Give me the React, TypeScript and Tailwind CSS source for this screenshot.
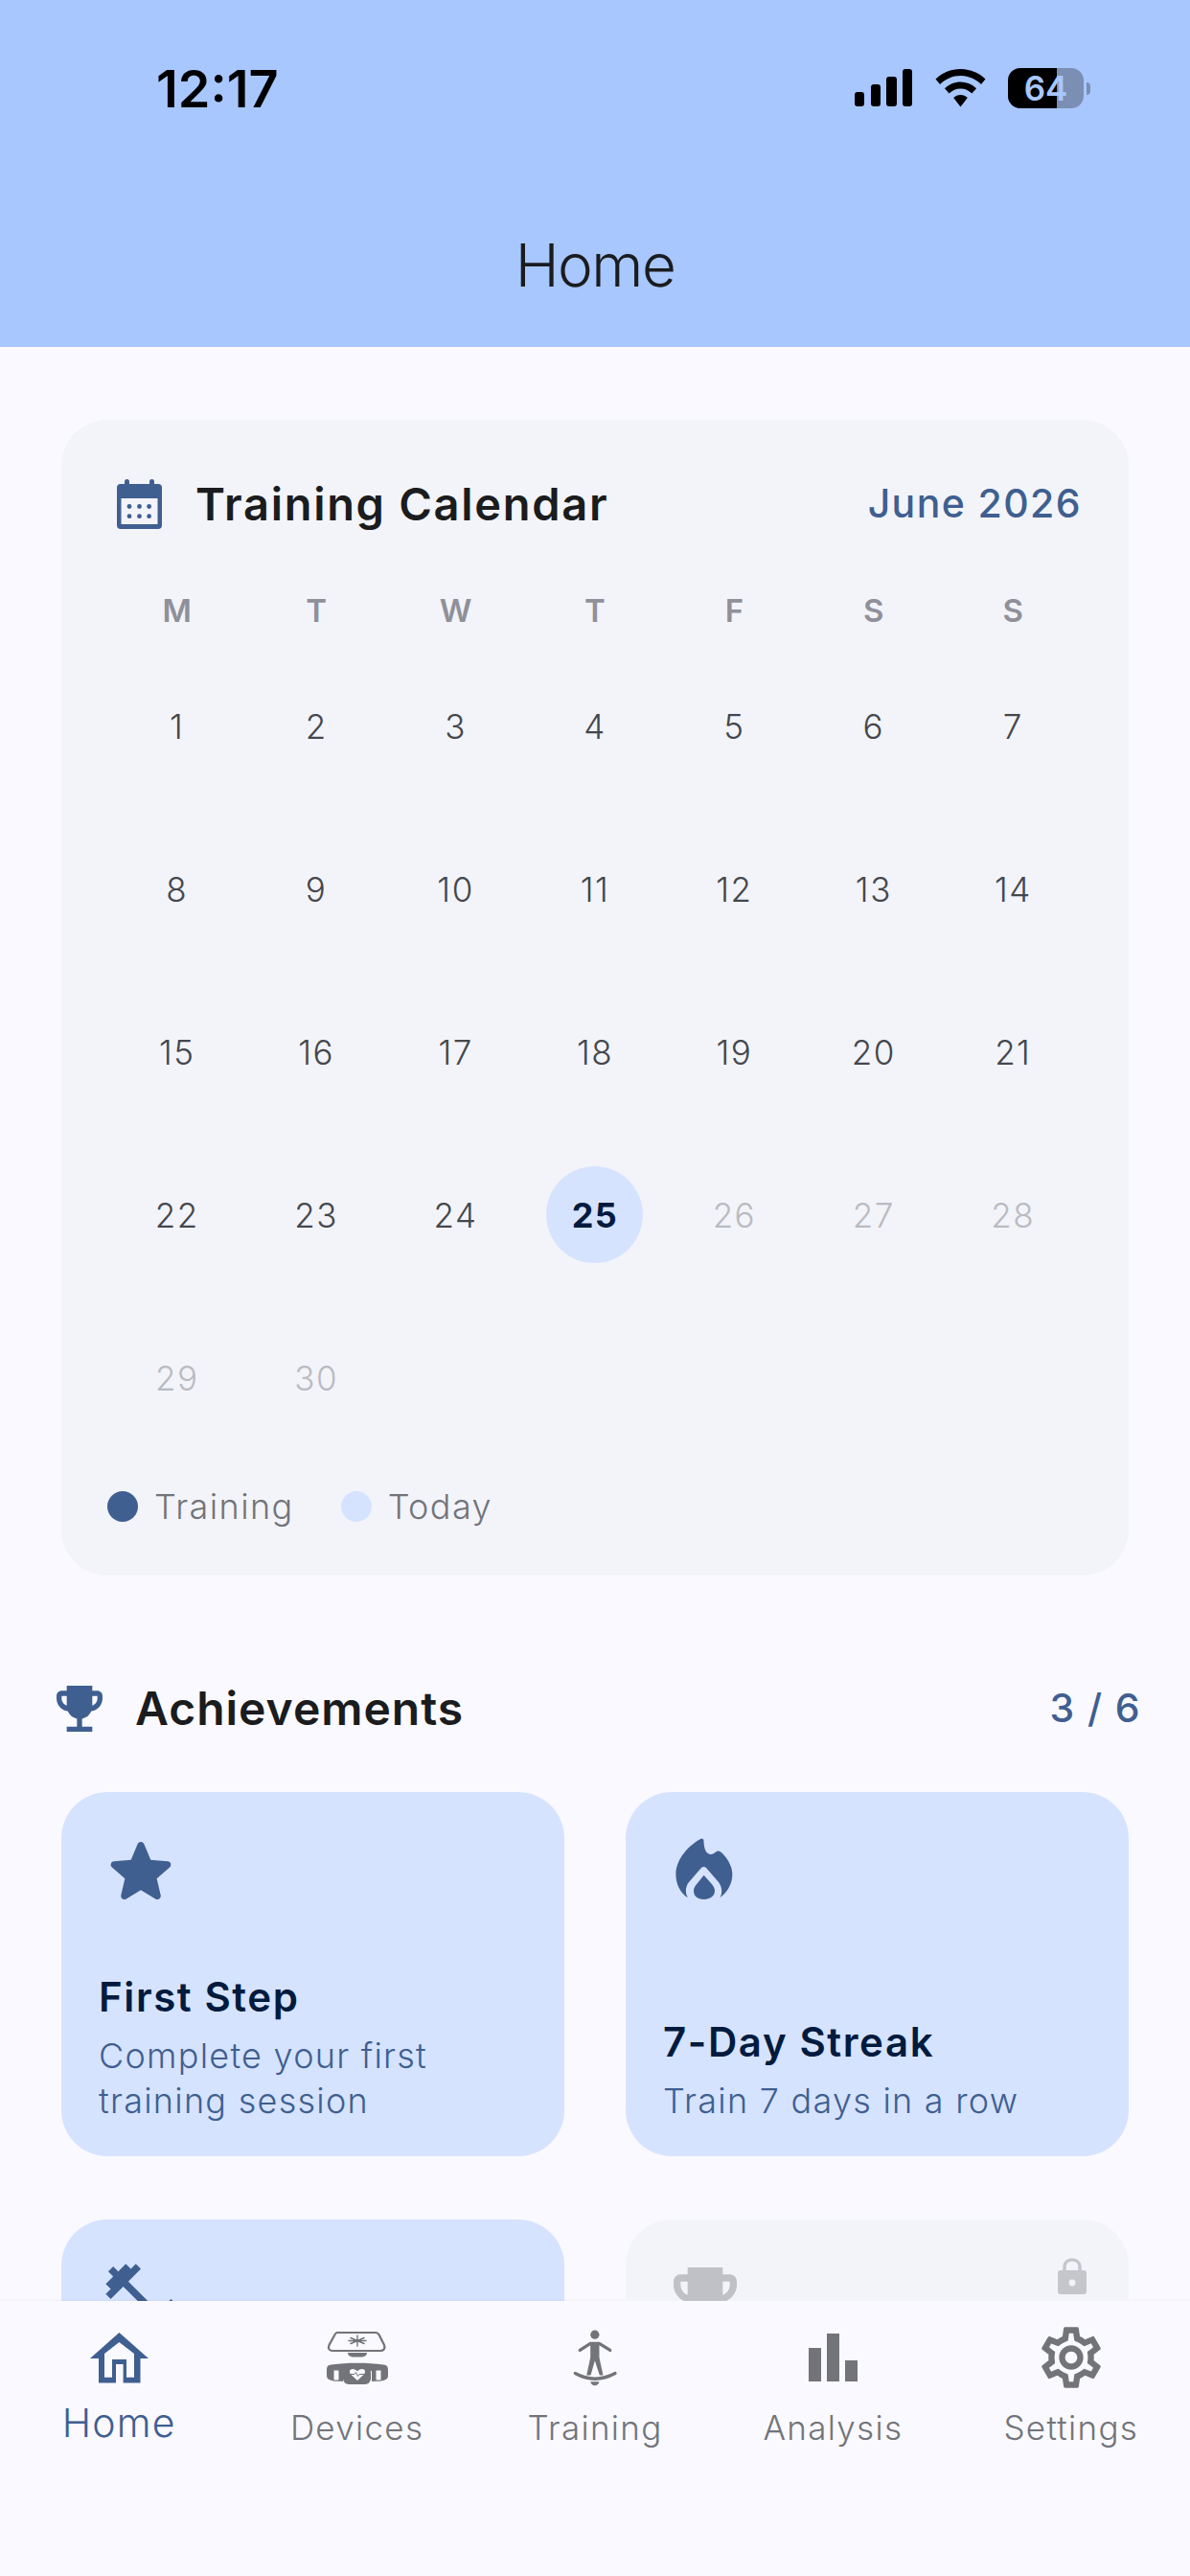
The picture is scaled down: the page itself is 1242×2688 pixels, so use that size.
import React from 'react';
import { MdEmojiEvents, MdFitnessCenter, MdOutlineSettings } from 'react-icons/md';

const week = ['M', 'T', 'W', 'T', 'F', 'S', 'S'];
const days = Array.from({ length: 30 }, (_, i) => i + 1);
const today = 25;

const StatusIcons = () => (
  <div className="flex items-center">
    <svg width="60" height="40" viewBox="0 0 60 40" fill="#000">
      <rect x="0" y="24" width="10" height="15" rx="3" />
      <rect x="17" y="16" width="10" height="23" rx="3" />
      <rect x="33" y="8" width="11" height="31" rx="3" />
      <rect x="50" y="0" width="10" height="39" rx="3" />
    </svg>
    <svg className="ml-[24px]" width="53" height="40" viewBox="0 0 53 40" fill="#000">
      <path d="M26.5 0C16.5 0 7.5 4 0.5 10.5L5 16C10.8 10.4 18.3 7 26.5 7C34.7 7 42.2 10.4 48 16L52.5 10.5C45.5 4 36.5 0 26.5 0Z" />
      <path d="M26.5 13.5C20.2 13.5 14.5 16 10 20.2L14.6 25.6C17.8 22.5 22 20.6 26.5 20.6C31 20.6 35.2 22.5 38.4 25.6L43 20.2C38.5 16 32.8 13.5 26.5 13.5Z" />
      <path d="M26.5 27C23.8 27 21.2 28.1 19.2 30L26.5 39.5L33.8 30C31.8 28.1 29.2 27 26.5 27Z" />
    </svg>
    <div className="relative ml-[23px] h-[42px] w-[79px] overflow-hidden rounded-[13px] bg-[#7b8eb3]">
      <div className="h-full w-[51px] bg-black" />
      <span className="absolute inset-0 flex items-center justify-center font-['Inter',sans-serif] text-[35px] font-semibold text-[#a8c7ff]">
        64
      </span>
    </div>
    <div className="ml-[3px] h-[13px] w-[4px] rounded-r-full bg-[#7b8eb3]" />
  </div>
);

const CalendarIcon = () => (
  <svg width="47" height="52" viewBox="0 0 47 52">
    <rect x="8" y="0" width="5" height="10" rx="2.5" fill="#3f5f90" />
    <rect x="34" y="0" width="5" height="10" rx="2.5" fill="#3f5f90" />
    <rect x="0" y="5" width="47" height="47" rx="4" fill="#3f5f90" />
    <rect x="4.5" y="20" width="38" height="27" fill="#f3f4f9" />
    {[13, 23.5, 33.6].map((x) =>
      [28.5, 38.7].map((y) => <circle key={`${x}-${y}`} cx={x} cy={y} r="2.4" fill="#3f5f90" />)
    )}
  </svg>
);

const StarIcon = () => (
  <svg width="88" height="88" viewBox="0 0 24 24" fill="#3f5f90">
    <path d="M12 17.27l4.15 2.51c.76.46 1.69-.22 1.49-1.08l-1.1-4.72 3.67-3.18c.67-.58.31-1.68-.57-1.75l-4.83-.41-1.89-4.46c-.34-.81-1.5-.81-1.84 0L9.19 8.63l-4.83.41c-.88.07-1.24 1.17-.57 1.75l3.67 3.18-1.1 4.72c-.2.86.73 1.54 1.49 1.08l4.15-2.5z" />
  </svg>
);

const FlameIcon = () => (
  <svg width="88" height="88" viewBox="0 0 88 88" fill="#3f5f90">
    <path d="M39 10C41 8.5 42.5 10 42.5 12C42.5 17 44 26 49.8 26C52 26 54 24 56 23C58 22 60 23 62 25C68 31 72.3 39 72.3 47C72.3 57 67 66 59.4 71.3C62 67 62 60 58 55L45 40C43.8 38.5 41.4 38.5 40 40L27 55C23 60 23 67 25.9 71.3C18 66 13.4 57 13.4 47C13.4 30 28 16 39 10Z" />
    <path d="M42.6 47.7L50 56C52.5 58.8 54 61 54 64C54 69.5 49 73 42.6 73C36 73 32 69.5 32 64C32 61 33.5 58.8 36 56Z" />
  </svg>
);

const LockIcon = () => (
  <svg width="30" height="38" viewBox="0 0 30 38">
    <path d="M7 16V9.5C7 5 10.5 2 15 2C19.5 2 23 5 23 9.5V16" fill="none" stroke="#c4c6cc" strokeWidth="3.5" />
    <rect x="0" y="13" width="30" height="25" rx="3" fill="#c4c6cc" />
    <circle cx="15" cy="26" r="3.4" fill="#f3f4f9" />
  </svg>
);

const HomeIcon = () => (
  <svg width="61" height="53" viewBox="0 0 61 53" fill="#3f5f90" fillRule="evenodd">
    <path d="M30.4 0L61 27H52.5V52.5H9V27H0ZM30.4 10L15 22V46.7H23V28H38V46.7H46V22ZM27 33V52.5H34.6V33Z" />
  </svg>
);

const DevicesIcon = () => (
  <svg width="66" height="56" viewBox="0 0 66 56">
    <path d="M12 2H52C54 2 55 3 56 5L61 15C62.5 19 60 21 57 21H7C4 21 2 19 3.5 15L9 5C10 3 10.5 2 12 2Z" fill="none" stroke="#72747a" strokeWidth="2.2" />
    <path d="M23 23H43C43 26 40 27.5 37 27.5H29C26 27.5 23 26 23 23Z" fill="#72747a" />
    <g stroke="#72747a" strokeWidth="1.4" strokeLinecap="round">
      <path d="M33 5V16M26 7.5L40 13.5M40 7.5L26 13.5M24 10.5H42" />
    </g>
    <path d="M1 42C1 37 2 36 6 35.5C22 33 44 33 60 35.5C64 36 65 37 65 42V47C65 50 63 51 60 52L48 53V42H18V53L6 52C3 51 1 50 1 47Z" fill="#72747a" />
    <rect x="8" y="41" width="6" height="11" fill="#faf9ff" stroke="#72747a" strokeWidth="1" />
    <rect x="52" y="41" width="6" height="11" fill="#faf9ff" stroke="#72747a" strokeWidth="1" />
    <rect x="18" y="37" width="29" height="19" rx="6" fill="#72747a" />
    <path d="M33 52L26 45.5C24 43 25 40 28 40C30 40 32 41 33 42.5C34 41 36 40 38 40C41 40 42 43 40 45.5Z" fill="#faf9ff" />
    <path d="M26 45.5H30L31.5 43.5L33.5 47.5L35 45.5H40" fill="none" stroke="#72747a" strokeWidth="1" />
  </svg>
);

const TrainingIcon = () => (
  <svg width="48" height="60" viewBox="110 60 145 180" fill="#72747a">
    <circle cx="182" cy="78" r="14" />
    <path d="M135 127L168 106H196L230 127" fill="none" stroke="#72747a" strokeWidth="10" strokeLinecap="round" strokeLinejoin="round" />
    <path d="M168 103H196V150L208 206H197L182 160L169 206H156L168 150Z" />
    <path d="M120 200C160 222 205 222 246 200" fill="none" stroke="#72747a" strokeWidth="10" strokeLinecap="round" />
    <path d="M168 226H196C194 234 188 238 182 238C176 238 170 234 168 226Z" />
  </svg>
);

const AnalysisIcon = () => (
  <svg width="51" height="50" viewBox="0 0 51 50" fill="#72747a">
    <rect x="0" y="15" width="13" height="35" />
    <rect x="19" y="0" width="13" height="50" />
    <rect x="38" y="28" width="13" height="22" />
  </svg>
);

const AchievementCard = ({ icon, title, lines }: { icon: React.ReactNode; title: string; lines: string[] }) => (
  <div className="flex h-[380px] flex-col justify-between rounded-[48px] bg-[#d6e3ff] p-[39px] pb-[34px]">
    {icon}
    <div>
      <div className="mb-[10px] text-[42px] leading-[56px] font-semibold tracking-[1.6px] text-[#001b3e]">{title}</div>
      {lines.map((line) => (
        <div key={line} className="text-[36px] leading-[47px] font-light tracking-[1.25px] text-[#3f5f90]">
          {line}
        </div>
      ))}
    </div>
  </div>
);

const NavItem = ({ icon, label, active }: { icon: React.ReactNode; label: string; active?: boolean }) => (
  <div className="flex flex-col items-center">
    <div className="flex h-[64px] items-center justify-center">{icon}</div>
    {active ? (
      <span className="mt-[11px] text-[41px] leading-[50px] font-light tracking-[1.2px] text-[#3f5f90]">{label}</span>
    ) : (
      <span className="mt-[19px] text-[35px] leading-[44px] font-light tracking-[1.3px] text-[#72747a]">{label}</span>
    )}
  </div>
);

export default function App() {
  return (
    <div className="flex h-[2688px] w-[1242px] flex-col overflow-hidden bg-[#faf9ff] font-['Inter',sans-serif]">
      {/* Header */}
      <div className="h-[362px] shrink-0 bg-[#a8c7ff] pt-[60px]">
        <div className="flex h-[64px] items-center justify-between pr-[104px] pl-[163px]">
          <span className="text-[54px] font-semibold tracking-[0px] text-black">12:17</span>
          <StatusIcons />
        </div>
        <div className="mt-[113px] text-center text-[62px] leading-[80px] font-light tracking-[-1.5px] text-[#1a1c1e]">
          Home
        </div>
      </div>

      {/* Scrolling content */}
      <div className="min-h-0 flex-1 overflow-hidden px-[64px] pt-[76px]">
        <div className="rounded-[48px] bg-[#f3f4f9] px-[48px] pt-[60px] pb-[50px]">
          <div className="flex h-[56px] items-center justify-between pr-[1px] pl-[10px]">
            <div className="flex items-center gap-[35px]">
              <CalendarIcon />
              <span className="text-[47px] font-semibold tracking-[1.7px] text-[#1a1c1e]">Training Calendar</span>
            </div>
            <span className="text-[41px] font-medium tracking-[1.4px] text-[#3f5f90]">June 2026</span>
          </div>

          <div className="mt-[59px] grid h-[48px] grid-cols-7 items-center text-center text-[33px] font-semibold text-[#8f9099]">
            {week.map((d, i) => (
              <span key={i}>{d}</span>
            ))}
          </div>

          <div className="mt-[11px] grid grid-cols-7">
            {days.map((d) => (
              <div key={d} className="flex h-[170px] items-center justify-center">
                {d === today ? (
                  <div className="flex h-[101px] w-[101px] items-center justify-center rounded-full bg-[#d6e3ff] pt-[2px] text-[36px] font-bold tracking-[1.5px] text-[#001b3e]">
                    {d}
                  </div>
                ) : (
                  <span className={d > today ? 'pt-[3px] text-[35px] font-light tracking-[1.5px] text-[#b9bbc2]' : 'pt-[3px] text-[35px] font-light tracking-[1.5px] text-[#44474e]'}>
                    {d}
                  </span>
                )}
              </div>
            ))}
          </div>

          <div className="mt-[28px] flex h-[44px] items-center">
            <div className="h-[32px] w-[32px] rounded-full bg-[#3f5f90]" />
            <span className="ml-[17px] text-[36px] font-light tracking-[1.4px] text-[#72747a]">Training</span>
            <div className="ml-[49px] h-[32px] w-[32px] rounded-full bg-[#d6e3ff]" />
            <span className="ml-[17px] text-[36px] font-light tracking-[1.4px] text-[#72747a]">Today</span>
          </div>
        </div>

        <div className="-mx-[13px] mt-[107px] flex h-[64px] items-center justify-between">
          <div className="flex items-center gap-[26px]">
            <MdEmojiEvents size={64} color="#3f5f90" />
            <span className="text-[48px] font-semibold tracking-[1px] text-[#1a1c1e]">Achievements</span>
          </div>
          <span className="text-[41px] font-medium tracking-[1.4px] text-[#3f5f90]">3 / 6</span>
        </div>

        <div className="mt-[55px] grid grid-cols-2 gap-x-[64px] gap-y-[66px]">
          <AchievementCard icon={<StarIcon />} title="First Step" lines={['Complete your first', 'training session']} />
          <AchievementCard icon={<FlameIcon />} title="7-Day Streak" lines={['Train 7 days in a row']} />
          <div className="h-[380px] rounded-[48px] bg-[#d6e3ff] p-[39px]">
            <MdFitnessCenter size={88} color="#3f5f90" />
          </div>
          <div className="relative h-[380px] rounded-[48px] bg-[#f3f4f9] p-[39px]">
            <MdEmojiEvents size={88} color="#c0c1c6" />
            <div className="absolute top-[40px] right-[44px]">
              <LockIcon />
            </div>
          </div>
        </div>
      </div>

      {/* Bottom navigation */}
      <div className="grid h-[287px] shrink-0 grid-cols-5 bg-[#faf9ff] pt-[27px] shadow-[0_-1px_2px_rgba(0,0,0,0.04)]">
        <NavItem active icon={<HomeIcon />} label="Home" />
        <NavItem icon={<DevicesIcon />} label="Devices" />
        <NavItem icon={<TrainingIcon />} label="Training" />
        <NavItem icon={<AnalysisIcon />} label="Analysis" />
        <NavItem icon={<MdOutlineSettings size={76} color="#72747a" />} label="Settings" />
      </div>
    </div>
  );
}
